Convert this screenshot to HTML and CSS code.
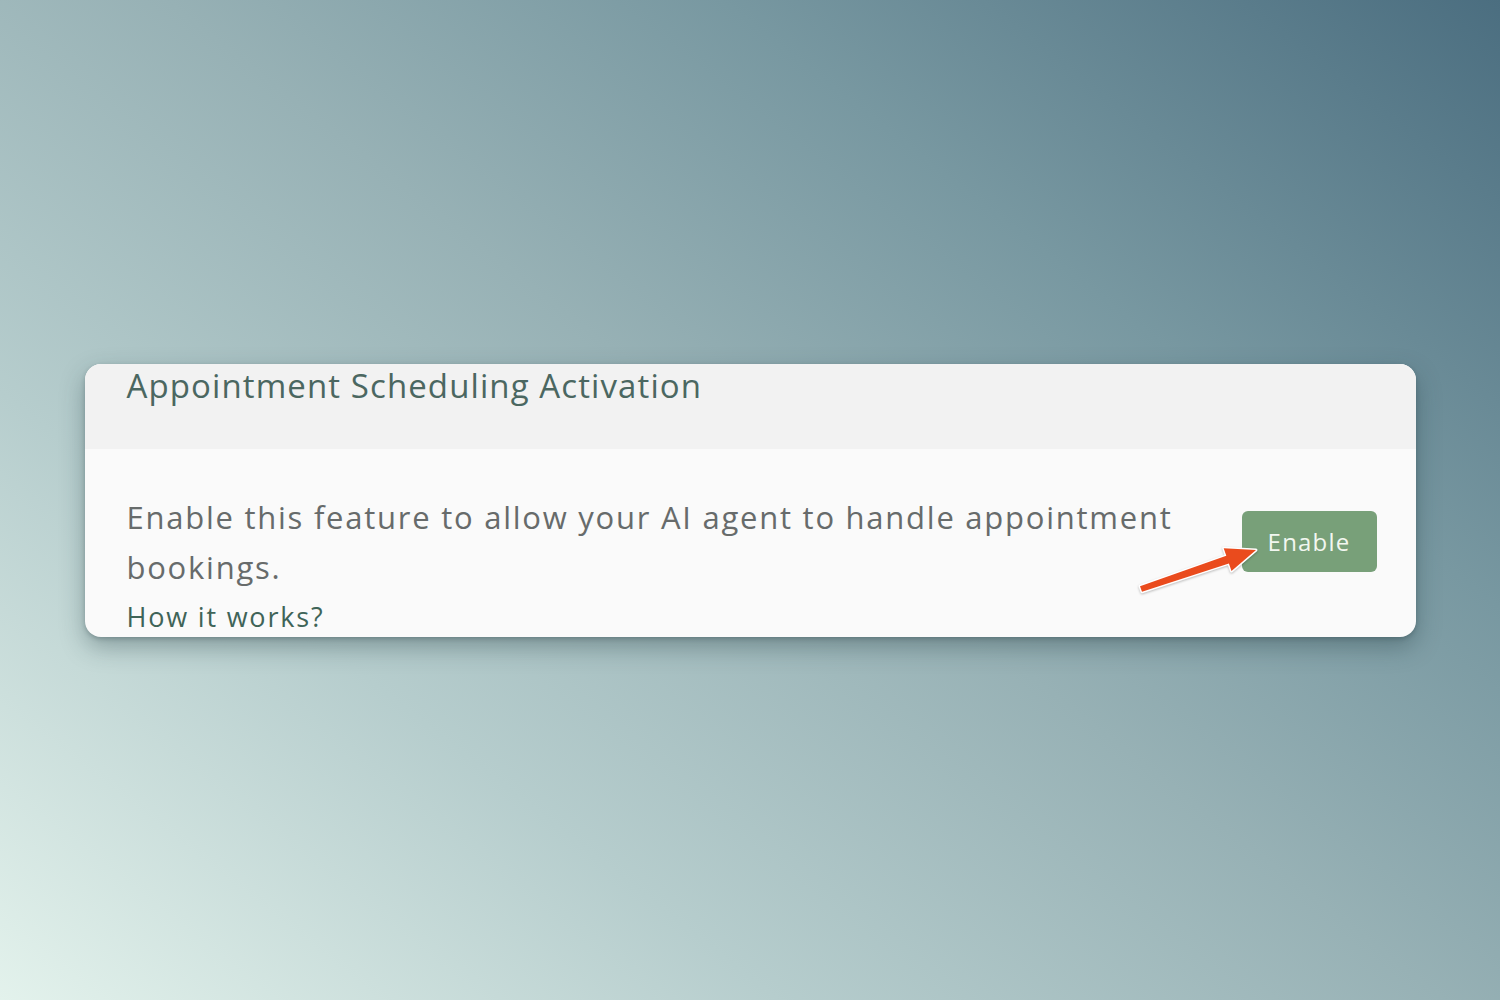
FILE: index.html
```html
<!DOCTYPE html>
<html lang="en">
<head>
<meta charset="utf-8">
<title>Appointment Scheduling Activation</title>
<link rel="stylesheet" href="styles.css">
</head>
<body>
<main class="stage">
  <section class="card">
    <header class="card-head">
      <h1 class="card-title">Appointment Scheduling Activation</h1>
    </header>
    <div class="card-body">
      <div class="row">
        <p class="desc">Enable this feature to allow your AI agent to handle appointment bookings.</p>
        <button class="btn-enable" type="button">Enable</button>
      </div>
      <a class="how" href="#">How it works?</a>
      <svg class="arrow" width="135" height="60" viewBox="0 0 135 60" aria-hidden="true">
        <polygon points="9,45.2 95.3,14.8 92.7,7.2 125,9 100.5,30 97.9,22.4 11,50.8" fill="#ea4b1d" stroke="#ffffff" stroke-width="3" stroke-linejoin="round" paint-order="stroke"/>
      </svg>
    </div>
  </section>
</main>
</body>
</html>
```
FILE: styles.css
```css
html, body {
  margin: 0;
  padding: 0;
}
body {
  font-family: "Open Sans", Lato, "Liberation Sans", sans-serif;
  background: linear-gradient(38deg, #e3f2ec 0%, #b6cdcd 28%, #97b1b5 52%, #7898a1 72%, #4b6e80 100%);
  min-height: 1000px;
}
.stage {
  height: 1000px;
  display: flex;
  align-items: center;
  justify-content: center;
}
.card {
  width: 1331px;
  height: 273px;
  border-radius: 16px;
  background: #fafafa;
  overflow: hidden;
  box-shadow: 0 10px 24px rgba(30, 55, 60, 0.35), 0 2px 4px rgba(30, 55, 60, 0.25);
  display: flex;
  flex-direction: column;
}
.card-head {
  flex: none;
  height: 85px;
  background: #f2f2f2;
  padding: 0 42px;
  box-sizing: border-box;
}
.card-title {
  margin: 0;
  font-size: 33px;
  font-weight: 400;
  letter-spacing: 1.1px;
  line-height: 44px;
  color: #4b6761;
}
.card-body {
  position: relative;
  flex: 1;
  min-height: 0;
  padding: 43px 39px 0 42px;
}
.row {
  display: flex;
  align-items: center;
  justify-content: space-between;
  gap: 60px;
}
.desc {
  margin: 0;
  font-size: 31px;
  letter-spacing: 1.75px;
  line-height: 50px;
  color: #676b6b;
  flex: 1;
}
.btn-enable {
  flex: none;
  width: 135px;
  height: 61px;
  border: none;
  border-radius: 6px;
  background: #78a079;
  color: #f2f7f0;
  font-family: inherit;
  font-size: 24px;
  letter-spacing: 1.2px;
}
.how {
  display: block;
  font-size: 27px;
  letter-spacing: 1.8px;
  line-height: 50px;
  color: #3f6458;
  text-decoration: none;
}
.arrow {
  position: absolute;
  left: 1046px;
  top: 92px;
  filter: drop-shadow(0 1px 1px rgba(0,0,0,0.25));
}
```
